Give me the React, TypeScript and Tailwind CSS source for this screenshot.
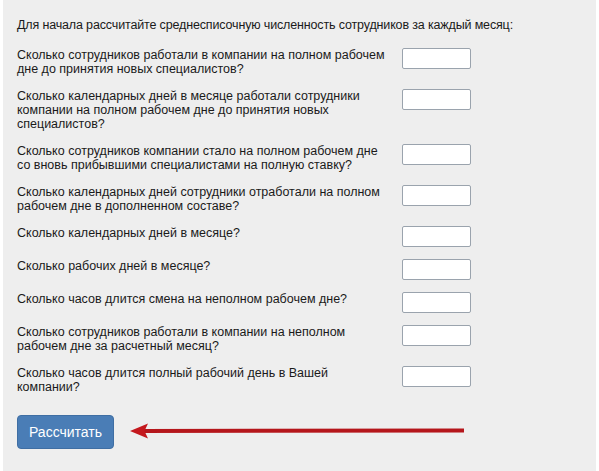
import React from "react";

const questions: string[][] = [
  ["Сколько сотрудников работали в компании на полном рабочем", "дне до принятия новых специалистов?"],
  ["Сколько календарных дней в месяце работали сотрудники", "компании на полном рабочем дне до принятия новых", "специалистов?"],
  ["Сколько сотрудников компании стало на полном рабочем дне", "со вновь прибывшими специалистами на полную ставку?"],
  ["Сколько календарных дней сотрудники отработали на полном", "рабочем дне в дополненном составе?"],
  ["Сколько календарных дней в месяце?"],
  ["Сколько рабочих дней в месяце?"],
  ["Сколько часов длится смена на неполном рабочем дне?"],
  ["Сколько сотрудников работали в компании на неполном", "рабочем дне за расчетный месяц?"],
  ["Сколько часов длится полный рабочий день в Вашей", "компании?"],
];

export default function App() {
  return (
    <div className="w-[599px] h-[471px] bg-white pl-[3px] overflow-hidden font-['Liberation_Sans',Arial,sans-serif]">
      <div className="relative w-[593px] h-full bg-[#eeeeee] text-[#1a1a1a] text-[12.5px] leading-[14px] pl-[14px] pt-[18px]">
        <p className="tracking-[-0.15px]">Для начала рассчитайте среднесписочную численность сотрудников за каждый месяц:</p>

        <div className="mt-[16px] flex flex-col gap-[12px]">
          {questions.map((lines, i) => (
            <div key={i} className="flex items-start">
              <div className="w-[385px] pb-[1px]">
                {lines.map((l, j) => (
                  <div key={j}>{l}</div>
                ))}
              </div>
              <input
                type="text"
                className="w-[69px] h-[21px] bg-white border border-[#9aa3ad] rounded-[2px] outline-none"
              />
            </div>
          ))}
        </div>

        <button className="mt-[20px] w-[97px] h-[34px] rounded-[4px] bg-[#4a7db6] border border-[#3f6ea3] text-white text-[14px]">
          Рассчитать
        </button>

        <svg
          className="absolute left-[124px] top-[421px]"
          width="340"
          height="20"
          viewBox="0 0 340 20"
        >
          <path d="M16 8 L337 7.6 L337 11.4 L16 12 Z" fill="#b5161b" />
          <path d="M3 10 L21 2.5 L17.5 10 L21 17.5 Z" fill="#c4181d" />
        </svg>
      </div>
    </div>
  );
}
